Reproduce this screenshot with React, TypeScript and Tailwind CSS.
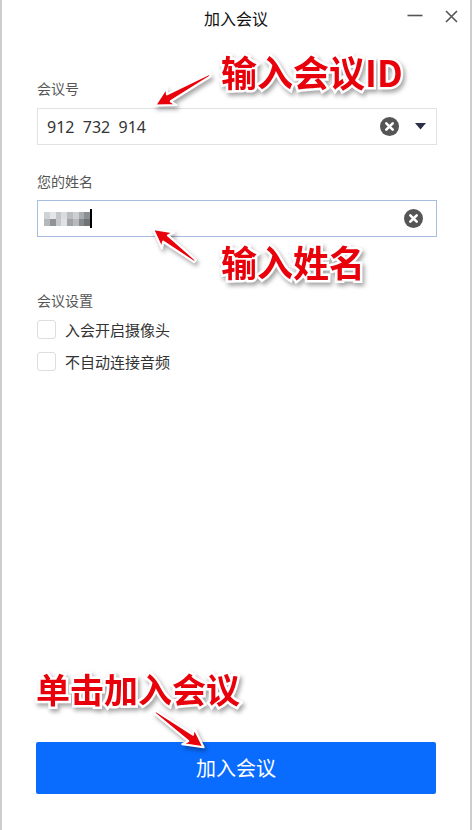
import React from 'react';

const CJK = "font-['Microsoft_YaHei','Noto_Sans_CJK_SC',sans-serif]";

const ClearIcon: React.FC = () => (
  <svg width="19" height="19" viewBox="0 0 19 19">
    <circle cx="9.5" cy="9.5" r="9.5" fill="#555" />
    <path d="M6.3 6.3 L12.7 12.7 M12.7 6.3 L6.3 12.7" stroke="#fff" strokeWidth="2.6" strokeLinecap="round" />
  </svg>
);

const Arrow: React.FC<{ x: number; y: number; angle: number; len: number }> = ({ x, y, angle, len }) => {
  const L = len;
  const pts = `0,-1.4 ${L - 16},-4 ${L - 19},-10 ${L},0 ${L - 19},10 ${L - 16},4 0,1.4`;
  return (
    <g transform={`translate(${x} ${y}) rotate(${angle})`}>
      <polygon points={pts} fill="#e8000b" stroke="#fff" strokeWidth="2.2" strokeLinejoin="round" />
    </g>
  );
};

const blurCells = [
  'bg-[#cfd3d6]', 'bg-[#e3e5e7]', 'bg-[#c3c7ca]', 'bg-[#d9dcde]', 'bg-[#b9bdc0]', 'bg-[#cdd0d3]', 'bg-[#a9adb0]', 'bg-[#8c9093]',
  'bg-[#b4b8bb]', 'bg-[#8f9396]', 'bg-[#c6c9cc]', 'bg-[#dfe1e3]', 'bg-[#9fa3a6]', 'bg-[#b7babd]', 'bg-[#868a8d]', 'bg-[#6f7376]',
];

const Annotation: React.FC<{ text: string; className: string }> = ({ text, className }) => (
  <div
    className={`absolute ${CJK} leading-none font-bold text-[#e8000b] whitespace-nowrap [-webkit-text-stroke:5px_#fff] [paint-order:stroke_fill] drop-shadow-[2px_3px_2px_rgba(0,0,0,0.35)] ${className}`}
  >
    {text}
  </div>
);

const Check: React.FC<{ label: string }> = ({ label }) => (
  <label className="h-[19px] flex items-center gap-[9px]">
    <span className="w-[19px] h-[19px] rounded-[3px] border border-[#dedede] bg-white" />
    <span className="text-[15px] leading-[19px] text-[#333]">{label}</span>
  </label>
);

export default function App() {
  return (
    <div className={`relative w-[472px] h-[830px] bg-white border-l-2 border-r-2 border-[#cdcdcd] flex flex-col overflow-hidden ${CJK}`}>
      {/* title bar */}
      <div className="relative h-[36px] flex items-center justify-center shrink-0">
        <span className="text-[16px] text-[#111]">加入会议</span>
        <div className="absolute right-[12px] top-[9px] flex items-center gap-[22px]">
          <svg width="16" height="14" viewBox="0 0 16 14">
            <path d="M0.5 6.5 H15.5" stroke="#555" strokeWidth="1.6" />
          </svg>
          <svg width="13" height="13" viewBox="0 0 13 13">
            <path d="M1 1 L12 12 M12 1 L1 12" stroke="#555" strokeWidth="1.6" />
          </svg>
        </div>
      </div>

      <div className="flex-1 flex flex-col pl-[35px] pr-[33px]">
        <div className="mt-[44px] h-[16px] leading-[16px] text-[14px] text-[#555]">会议号</div>
        <div className="mt-[12px] h-[37px] border border-[#e2e2e2] flex items-center pl-[9px] pr-[10px]">
          <span className="flex-1 whitespace-pre text-[16px] text-[#333] font-['Noto_Sans',sans-serif]">912  732  914</span>
          <ClearIcon />
          <svg className="ml-[16px]" width="11" height="7" viewBox="0 0 11 7">
            <path d="M0 0 H11 L5.5 6.5 Z" fill="#2b3047" />
          </svg>
        </div>

        <div className="mt-[28px] h-[16px] leading-[16px] text-[14px] text-[#555]">您的姓名</div>
        <div className="mt-[11px] h-[37px] border border-[#a9bde0] flex items-center pl-[6px] pr-[13px]">
          <div className="flex-1 flex items-center">
            <div className="grid grid-cols-8 w-[46px] h-[14px]">
              {blurCells.map((c, i) => (
                <div key={i} className={c} />
              ))}
            </div>
            <div className="w-[1.5px] h-[19px] bg-black" />
          </div>
          <ClearIcon />
        </div>

        <div className="mt-[55px] h-[16px] leading-[16px] text-[14px] text-[#555]">会议设置</div>
        <div className="mt-[12px] flex flex-col gap-[13px]">
          <Check label="入会开启摄像头" />
          <Check label="不自动连接音频" />
        </div>

        <button className="mt-auto mb-[36px] h-[52px] w-[400px] -ml-[1px] rounded-[2px] bg-[#0a6cff] text-white text-[20px]">
          加入会议
        </button>
      </div>

      {/* annotations */}
      <svg className="absolute left-[-2px] top-0 pointer-events-none drop-shadow-[2px_3px_2px_rgba(0,0,0,0.35)]" width="472" height="830">
        <Arrow x={210} y={75} angle={151} len={63} />
        <Arrow x={195} y={261} angle={-142.7} len={53} />
        <Arrow x={155} y={712} angle={36} len={60} />
      </svg>
      <Annotation text="输入会议ID" className="text-[36px] left-[219px] top-[53px]" />
      <Annotation text="输入姓名" className="text-[36px] left-[219px] top-[243px]" />
      <Annotation text="单击加入会议" className="text-[34px] left-[34px] top-[672px]" />
    </div>
  );
}
